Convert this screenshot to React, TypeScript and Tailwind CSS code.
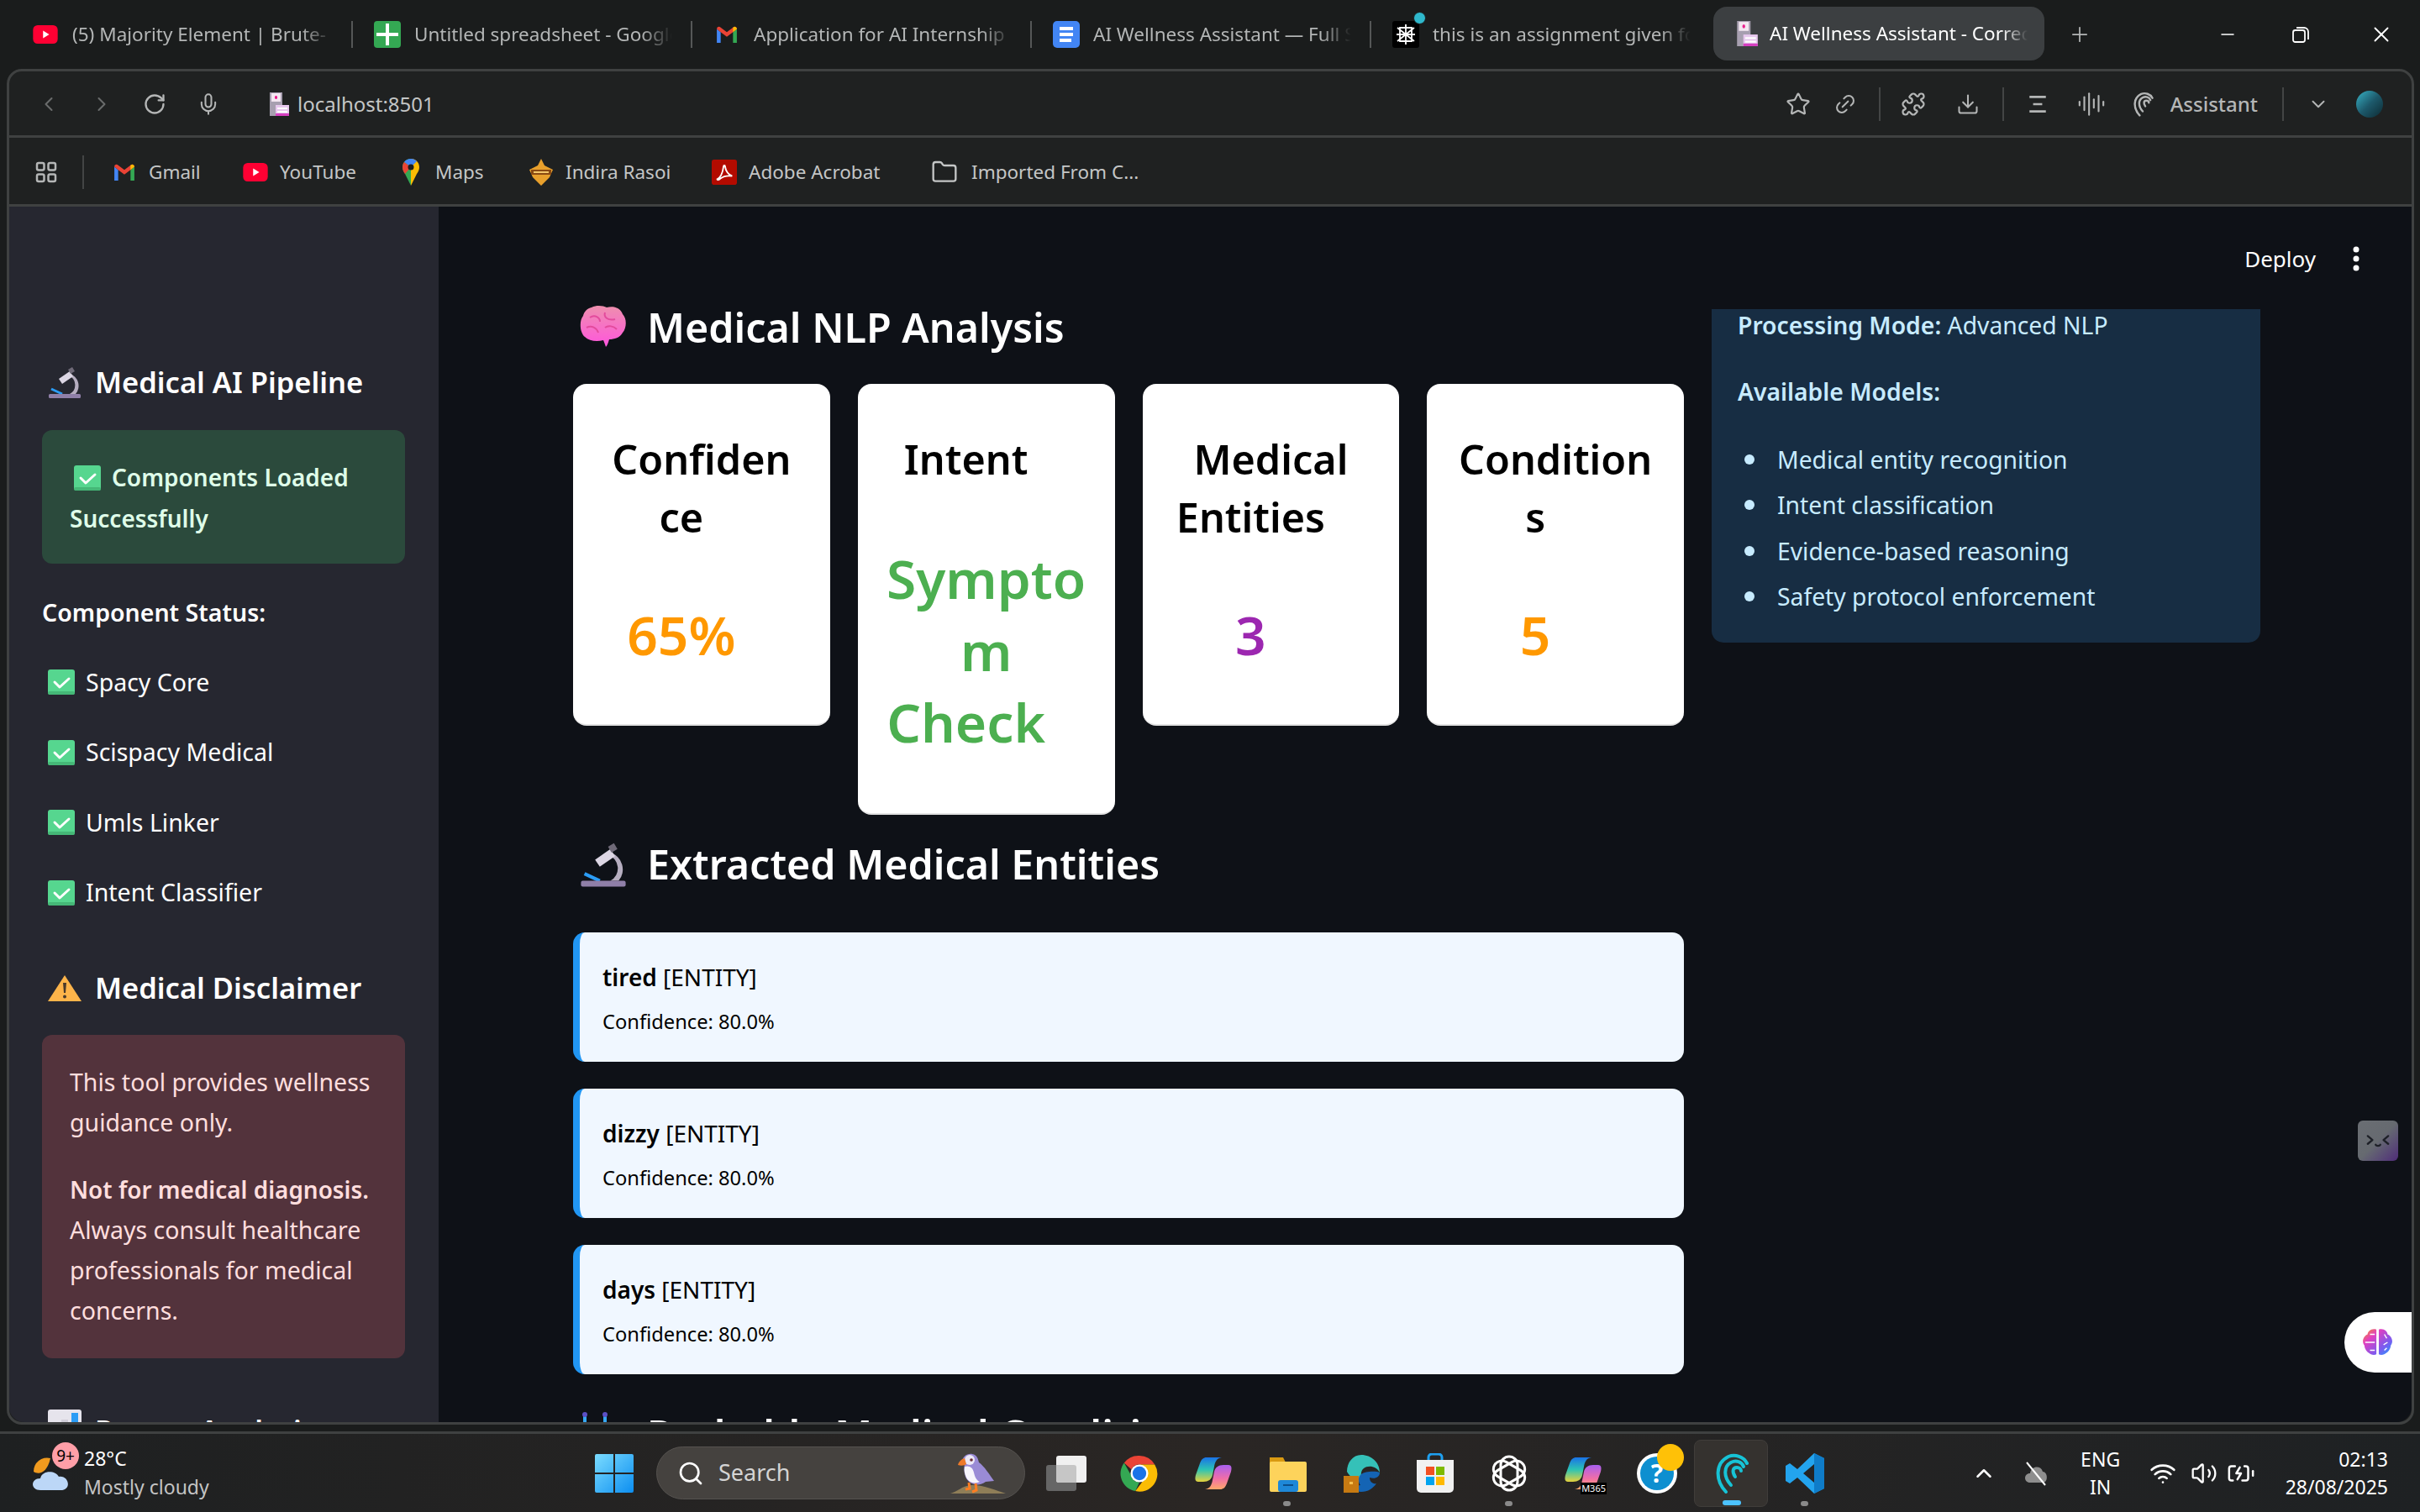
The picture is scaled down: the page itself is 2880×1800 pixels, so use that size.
import {
  AudioLines, ChevronDown, ChevronLeft, ChevronRight, ChevronUp, Download, Folder, Link2, Mic,
  Minus, Plus, Puzzle, RotateCw, Search, Star, Volume2, Wifi, X, BatteryCharging,
} from 'lucide-react';
import type { ReactNode } from 'react';

// small drawings for favicons and emoji
function Hospital({ className = 'w-[24px] h-[28px]' }: { className?: string }) {
  return (
    <svg viewBox="0 0 24 28" className={className}>
      <rect x="1" y="0" width="15" height="28" fill="#a79fb0" />
      <rect x="3" y="1" width="11" height="10" fill="#f3e6f1" />
      <path d="M7 6h3M8.500 4v4" stroke="#e91e8c" strokeWidth="2" />
      <rect x="8" y="15" width="16" height="13" fill="#e7c8ee" />
      <rect x="10" y="18" width="12" height="2" fill="#fff" />
      <rect x="10" y="22" width="12" height="2" fill="#fff" />
      <rect x="8" y="25" width="16" height="3" fill="#d63fc0" />
    </svg>
  );
}

function YouTubeIcon() {
  return (
    <svg viewBox="0 0 32 24" className="w-[30px] h-[22px]">
      <rect width="32" height="24" rx="6" fill="#ff0033" />
      <path d="M13 7l8 5-8 5z" fill="#fff" />
    </svg>
  );
}

function GmailIcon() {
  return (
    <svg viewBox="0 0 30 24" className="w-[28px] h-[22px]">
      <path d="M2 23V5l5 4v14z" fill="#4285f4" />
      <path d="M28 23V5l-5 4v14z" fill="#34a853" />
      <path d="M2 5c0-3 3-4 5-2l8 6 8-6c2-2 5-1 5 2l-5 4-8 6-8-6z" fill="#ea4335" />
      <path d="M23 9l5-4c0-2-2-3-3-3l-2 1z" fill="#fbbc04" />
    </svg>
  );
}

function SheetsIcon() {
  return (
    <svg viewBox="0 0 32 32" className="w-[32px] h-[32px]">
      <rect width="32" height="32" rx="4" fill="#34a853" />
      <path d="M3 14h26v4H3zM14 3h4v26h-4z" fill="#fff" />
    </svg>
  );
}

function DocsIcon() {
  return (
    <svg viewBox="0 0 32 32" className="w-[32px] h-[32px]">
      <rect width="32" height="32" rx="5" fill="#4285f4" />
      <path d="M8 7h16v4H8zM8 14h16v4H8zM8 21h14v4H8z" fill="#fff" />
    </svg>
  );
}

function PerplexityIcon() {
  return (
    <div className="relative w-[32px] h-[32px]">
      <svg viewBox="0 0 32 32" className="w-[32px] h-[32px]">
        <rect width="32" height="32" rx="3" fill="#000" />
        <path d="M16 4v24M6 8l20 16M26 8L6 24M5 16h22M9 8h14v16H9z" stroke="#fff" strokeWidth="1.800" fill="none" />
      </svg>
      <span className="absolute right-[-8px] top-[-11px] w-[15px] h-[15px] rounded-full bg-[#2fb8cc] border-[1px] border-[#1a1c1c]" />
    </div>
  );
}

function MapsIcon() {
  return (
    <svg viewBox="0 0 20 32" className="w-[22px] h-[32px]">
      <path d="M10 0C4 0 0 4.500 0 10c0 3 1 5 3 8l7 14V10z" fill="#34a853" />
      <path d="M10 0c6 0 10 4.500 10 10 0 3-1 5-3 8l-7 14V10z" fill="#fbbc04" />
      <path d="M2 4C4 1 7 0 10 0c3 0 5 1 7 3l-7 7z" fill="#4285f4" />
      <path d="M0 10c0-2 .800-4.500 2-6l8 6-7 8c-2-3-3-5-3-8z" fill="#ea4335" />
      <circle cx="10" cy="10" r="3.500" fill="#1c1e1e" />
    </svg>
  );
}

function RasoiIcon() {
  return (
    <svg viewBox="0 0 30 32" className="w-[30px] h-[32px]">
      <path d="M15 0l4 8 10 5-4 9-10 10L5 22 1 13l10-5z" fill="#e8a02c" />
      <path d="M3 13h24v6H3z" fill="#8a4a12" />
      <path d="M6 15h18v2H6z" fill="#f4c76a" />
    </svg>
  );
}

function AcrobatIcon() {
  return (
    <svg viewBox="0 0 32 32" className="w-[32px] h-[32px]">
      <rect width="32" height="32" rx="3" fill="#b30b00" />
      <path d="M7 25c4-2 7-9 8-16 0-2 2-2 2 0 1 6 4 10 9 12-6-1-11 0-15 3-2 2-4 2-4 1z" stroke="#fff" strokeWidth="2" fill="none" />
    </svg>
  );
}

function Microscope({ className = 'w-[40px] h-[40px]' }: { className?: string }) {
  return (
    <svg viewBox="0 0 40 40" className={className}>
      <path d="M24 12a12 12 0 0 1 2 22h7a15 15 0 0 0-7-24z" fill="#b6aec0" />
      <path d="M13 16L26 7l4 6-13 9z" fill="#dcd6e4" />
      <path d="M24 5l5-3 3 5-5 3z" fill="#6f6a78" />
      <path d="M4 28l13 6" stroke="#2b9cf5" strokeWidth="3" />
      <rect x="1" y="34" width="38" height="5" rx="1.500" fill="#8f7fa8" />
    </svg>
  );
}

function Warning() {
  return (
    <svg viewBox="0 0 40 32" className="w-[40px] h-[32px]">
      <path d="M20 1L40 32H0z" fill="#fdb44a" />
      <path d="M18 10h4l-1 12h-2z" fill="#4a3a2a" />
      <circle cx="20" cy="26.500" r="2" fill="#4a3a2a" />
    </svg>
  );
}

function Brain() {
  return (
    <svg viewBox="0 0 56 50" className="w-[58px] h-[50px] shrink-0">
      <defs>
        <linearGradient id="brainfill" x1="0" y1="0" x2="0" y2="1">
          <stop offset="0" stopColor="#ee8fae" />
          <stop offset="1" stopColor="#ff55dd" />
        </linearGradient>
      </defs>
      <path
        d="M14 2c6-3 14-2 18 0 8-2 16 0 19 8 5 5 5 16 0 22-3 6-10 8-16 8-1 3-2 7-4 9-1-3-2-6-3-8-8 2-17 1-22-4C0 32-1 18 4 12c1-5 5-9 10-10z"
        fill="url(#brainfill)"
      />
      <path d="M12 14c6-4 12 0 12 5M30 8c-2 6 4 10 12 8M8 26c6-3 12 0 14 6M30 26c4-3 10-2 14 2" stroke="#e34b9c" strokeWidth="2" fill="none" />
    </svg>
  );
}

function CheckBox() {
  return (
    <svg viewBox="0 0 32 30" className="w-[32px] h-[30px] shrink-0">
      <rect width="32" height="30" rx="3" fill="#56d68f" />
      <rect y="26" width="32" height="4" rx="2" fill="#45b877" />
      <path d="M8 15l6 6 11-10" stroke="#fff" strokeWidth="3" fill="none" strokeLinecap="round" strokeLinejoin="round" />
    </svg>
  );
}

function WindowsLogo() {
  return (
    <svg viewBox="0 0 46 46" className="w-[46px] h-[46px]">
      <defs>
        <linearGradient id="win" x1="0" y1="0" x2="1" y2="1">
          <stop offset="0" stopColor="#7bdcff" />
          <stop offset="1" stopColor="#0c8ef0" />
        </linearGradient>
      </defs>
      <path d="M0 2a2 2 0 0 1 2-2h20v22H0zM24 0h20a2 2 0 0 1 2 2v20H24zM0 24h22v22H2a2 2 0 0 1-2-2zM24 24h22v20a2 2 0 0 1-2 2H24z" fill="url(#win)" />
    </svg>
  );
}

function Puffin() {
  return (
    <svg viewBox="0 0 70 50" className="w-[70px] h-[50px]">
      <path d="M2 49c8-2 14-9 24-10 14-1 30 6 42 10z" fill="#8f7e58" />
      <path d="M16 12c0-7 6-11 12-10 6 1 7 6 8 10 6 4 13 15 18 22l-10 1c-8 6-20 4-24-6-2-6-2-11-1-15z" fill="#9a8bd6" />
      <path d="M19 17c5-2 10 1 11 7 1 5 3 9 7 11-6 3-13 1-16-5-2-4-3-9-2-13z" fill="#f7f5fc" />
      <circle cx="25" cy="9" r="6" fill="#ece8f7" />
      <circle cx="27" cy="9" r="1.800" fill="#6a2b35" />
      <path d="M19 7c-4 1-7 4-8 8 3 1 8 1 10-1z" fill="#ee7a2a" />
      <path d="M24 36l1 7-5 1M32 37l1 8-5 2" stroke="#ff7d22" strokeWidth="3" fill="none" />
    </svg>
  );
}

function ChromeIcon() {
  return (
    <svg viewBox="0 0 48 48" className="w-[46px] h-[46px]">
      <path d="M24 2a22 22 0 0 1 19 11H24a11 11 0 0 0-10 6L5 11A22 22 0 0 1 24 2z" fill="#ea4335" />
      <path d="M5 11l9 16a11 11 0 0 0 10 8l-5 11A22 22 0 0 1 5 11z" fill="#34a853" />
      <path d="M43 13a22 22 0 0 1-24 33l9-12a11 11 0 0 0 5-10 11 11 0 0 0-9-11z" fill="#fbbc04" />
      <circle cx="24" cy="24" r="11" fill="#fff" />
      <circle cx="24" cy="24" r="8.500" fill="#1a73e8" />
    </svg>
  );
}

function CopilotIcon({ badge }: { badge?: boolean }) {
  const a = badge ? 'cpa2' : 'cpa';
  const b = badge ? 'cpb2' : 'cpb';
  return (
    <div className="relative w-[44px] h-[40px]">
      <svg viewBox="0 0 44 40" className="w-[44px] h-[40px]">
        <defs>
          <linearGradient id={a} x1="0" y1="0" x2="0" y2="1">
            <stop offset="0" stopColor="#1a72e8" />
            <stop offset=".5" stopColor="#2cc4b4" />
            <stop offset="1" stopColor="#e6d23c" />
          </linearGradient>
          <linearGradient id={b} x1="0" y1="0" x2="0" y2="1">
            <stop offset="0" stopColor="#a85ff0" />
            <stop offset=".55" stopColor="#f06ea8" />
            <stop offset="1" stopColor="#ffa86a" />
          </linearGradient>
        </defs>
        <path d="M14 1H32C26 2 24 6 23 12L21 22C20 27 16 30 10 30H4C0 30 0 26 1 22L6 8C8 3 10 1 14 1z" fill={`url(#${a})`} />
        <path d="M30 39H12C18 38 20 34 21 28L23 18C24 13 28 10 34 10H40C44 10 44 14 43 18L38 32C36 37 34 39 30 39z" fill={`url(#${b})`} />
      </svg>
      {badge && (
        <span className="absolute right-[-6px] bottom-[-5px] bg-black text-white text-[11px] leading-[14px] px-[1px]">M365</span>
      )}
    </div>
  );
}

function FilesIcon() {
  return (
    <svg viewBox="0 0 46 46" className="w-[46px] h-[46px]">
      <path d="M2 4h16l4 8H2z" fill="#d99a12" />
      <rect x="2" y="9" width="44" height="36" rx="2" fill="#fdd35b" />
      <rect x="12" y="31" width="24" height="14" rx="3" fill="#1e88d8" />
      <rect x="18" y="36" width="12" height="2" fill="#0c4f8a" />
    </svg>
  );
}

function EdgeIcon() {
  return (
    <svg viewBox="0 0 46 46" className="w-[46px] h-[46px]">
      <path d="M23 1c12 0 22 9 22 21-4-8-14-9-19-5-4 3-4 9-1 13-9 2-16-3-19-9C6 10 13 1 23 1z" fill="#35c1b8" />
      <path d="M45 22c0 6-6 8-12 6 0 6 5 8 8 7-4 6-10 10-18 10-9 0-17-6-20-15 3 6 10 9 19 7-3-4-3-10 1-13 5-4 18-4 22-2z" fill="#1464b4" />
      <rect x="2" y="26" width="18" height="20" fill="#c77a12" />
      <rect x="9" y="33" width="4" height="3" fill="#f5c14e" />
    </svg>
  );
}

function StoreIcon() {
  return (
    <svg viewBox="0 0 46 48" className="w-[46px] h-[48px]">
      <path d="M15 9V5a4 4 0 0 1 4-4h8a4 4 0 0 1 4 4v4" stroke="#1ea0f0" strokeWidth="3" fill="none" />
      <path d="M1 8h44v34a5 5 0 0 1-5 5H6a5 5 0 0 1-5-5z" fill="#f1f1f1" />
      <rect x="12" y="16" width="10" height="10" fill="#f25022" />
      <rect x="24" y="16" width="10" height="10" fill="#7fba00" />
      <rect x="12" y="28" width="10" height="10" fill="#00a4ef" />
      <rect x="24" y="28" width="10" height="10" fill="#ffb900" />
    </svg>
  );
}

function GptIcon() {
  return (
    <svg viewBox="0 0 46 46" className="w-[46px] h-[46px]" fill="none" stroke="#fff" strokeWidth="3">
      <rect x="13" y="3" width="20" height="40" rx="10" />
      <rect x="13" y="3" width="20" height="40" rx="10" transform="rotate(60 23 23)" />
      <rect x="13" y="3" width="20" height="40" rx="10" transform="rotate(120 23 23)" />
    </svg>
  );
}

function HelpIcon() {
  return (
    <div className="relative w-[48px] h-[48px]">
      <div className="w-[48px] h-[48px] rounded-full bg-white flex items-center justify-center">
        <div className="w-[40px] h-[40px] rounded-full bg-[#0d8fd0] flex items-center justify-center text-white font-bold text-[30px] leading-none">?</div>
      </div>
      <span className="absolute right-[-8px] top-[-11px] w-[32px] h-[32px] rounded-full bg-[#ffc107]" />
    </div>
  );
}

function WaveIcon({ className = 'w-[46px] h-[48px] text-[#17c3d6]' }: { className?: string }) {
  return (
    <svg viewBox="0 0 46 48" className={className} fill="none" stroke="currentColor" strokeWidth="4" strokeLinecap="round">
      <path d="M17 46C4 32 4 12 20 4c8-3 18 0 22 8" />
      <path d="M23 38C14 28 14 16 23 11c6-3 13-1 15 5" />
      <path d="M28 28c-4-6-3-11 2-11 3 0 5 2 5 4" />
    </svg>
  );
}

function VsCodeIcon() {
  return (
    <svg viewBox="0 0 46 48" className="w-[46px] h-[48px]">
      <path d="M34 0l12 6v36l-12 6-20-19-9 7-5-3V15l5-3 9 7zM34 13L21 24l13 11z" fill="#23a4ee" />
      <path d="M34 0l12 6v36l-12 6z" fill="#0f7cc8" />
    </svg>
  );
}

function BrainChip() {
  return (
    <svg viewBox="0 0 40 36" className="w-[38px] h-[36px]">
      <defs>
        <linearGradient id="bc" x1="0" y1="0" x2="1" y2="1">
          <stop offset="0" stopColor="#f7941d" />
          <stop offset=".3" stopColor="#e23fc0" />
          <stop offset=".7" stopColor="#7a5cf0" />
          <stop offset="1" stopColor="#1ea0ff" />
        </linearGradient>
      </defs>
      <path d="M18 2c-6-2-11 2-11 6-5 2-8 9-4 14 0 7 9 14 15 11zM21 2c6-2 11 2 11 6 5 2 8 9 4 14 0 7-9 14-15 11z" fill="url(#bc)" />
      <path d="M4 18h12M10 8h6M10 28h6M28 8l3 5M32 18l-5 3M28 28l3-3" stroke="#fff" strokeWidth="1.500" fill="none" />
    </svg>
  );
}

type TabProps = { icon: ReactNode; title: string; width: string; sep?: boolean };

function Tab({ icon, title, width, sep = true }: TabProps) {
  return (
    <div className={`flex items-center h-[64px] shrink-0 ${width}`}>
      <div className="w-[32px] flex justify-center shrink-0">{icon}</div>
      <span className="ml-[16px] flex-1 min-w-0 overflow-hidden whitespace-nowrap text-[22.500px] text-[#b4b6b6] [mask-image:linear-gradient(to_right,black_88%,transparent)]">
        {title}
      </span>
      {sep ? <span className="w-[2px] h-[32px] bg-[#555757] ml-[22px] mr-[25px] shrink-0" /> : <span className="w-[12px]" />}
    </div>
  );
}

function Bookmark({ icon, label, width }: { icon: ReactNode; label: string; width: string }) {
  return (
    <div className={`flex items-center gap-[14px] shrink-0 ${width}`}>
      <div className="flex justify-center w-[30px] shrink-0">{icon}</div>
      <span className="text-[22.500px] text-[#c4c6c6] whitespace-nowrap">{label}</span>
    </div>
  );
}

function AppSlot({ children, dot, active }: { children: ReactNode; dot?: boolean; active?: boolean }) {
  return (
    <div className={`relative w-[88px] h-[80px] flex items-center justify-center shrink-0 rounded-[8px] ${active ? 'bg-[#35322f] border border-[#403d3a]' : ''}`}>
      {children}
      {dot && <span className="absolute bottom-[1px] left-[39px] w-[9px] h-[6px] rounded-full bg-[#8a8a8a]" />}
      {active && <span className="absolute bottom-[1px] left-[33px] w-[22px] h-[6px] rounded-full bg-[#4cc2ff]" />}
    </div>
  );
}

const statusItems = ['Spacy Core', 'Scispacy Medical', 'Umls Linker', 'Intent Classifier'];
const entities = ['tired', 'dizzy', 'days'];
const models = ['Medical entity recognition', 'Intent classification', 'Evidence-based reasoning', 'Safety protocol enforcement'];

function Sidebar() {
  return (
    <aside className="w-[511px] shrink-0 bg-[#262730] overflow-hidden rounded-bl-[18px] pl-[39px] pr-[40px] pt-[181px]">
      <div className="flex items-center h-[56px] ml-[7px]">
        <Microscope />
        <h2 className="ml-[16px] text-[34.500px] font-semibold text-white whitespace-nowrap">Medical AI Pipeline</h2>
      </div>
      <div className="mt-[29px] h-[159px] rounded-[12px] bg-[#2b4a3c] pl-[33px] pt-[32px] text-[28px] leading-[49px] font-semibold text-[#dffde9]">
        <span className="inline-flex items-center ml-[5px] align-[-5px]"><CheckBox /></span>
        <span className="ml-[13px]">Components Loaded</span>
        <br />
        Successfully
      </div>
      <p className="mt-[34px] h-[48px] leading-[48px] text-[28.500px] font-semibold text-white">Component Status:</p>
      <div className="mt-[35px]">
        {statusItems.map((item) => (
          <div key={item} className="flex items-center h-[48px] mb-[35.500px] ml-[7px]">
            <CheckBox />
            <span className="ml-[13px] text-[28.500px] text-white whitespace-nowrap">{item}</span>
          </div>
        ))}
      </div>
      <div className="flex items-center h-[56px] ml-[7px] mt-[61px]">
        <Warning />
        <h2 className="ml-[16px] text-[34.500px] font-semibold text-white whitespace-nowrap">Medical Disclaimer</h2>
      </div>
      <div className="mt-[28px] h-[385px] rounded-[12px] bg-[#53333c] pl-[33px] pt-[32px] text-[28.500px] leading-[48px] text-[#ffdede]">
        <p>
          This tool provides wellness
          <br />
          guidance only.
        </p>
        <p className="mt-[32px]">
          <strong className="font-semibold text-[27.900px]">Not for medical diagnosis.</strong>
          <br />
          Always consult healthcare
          <br />
          professionals for medical
          <br />
          concerns.
        </p>
      </div>
      <div className="flex items-center h-[56px] ml-[7px] mt-[58px]">
        <svg viewBox="0 0 40 40" className="w-[40px] h-[40px] -mt-[10px]">
          <rect width="40" height="40" rx="3" fill="#e6e4ec" />
          <rect x="4" y="20" width="8" height="20" fill="#62c554" />
          <rect x="16" y="12" width="8" height="28" fill="#d0cdd8" />
          <rect x="28" y="4" width="8" height="36" fill="#2b9cf5" />
        </svg>
        <h2 className="ml-[16px] text-[34.500px] font-semibold text-white whitespace-nowrap">Recent Analysis</h2>
      </div>
    </aside>
  );
}

function MetricCard({ title, value, color, tall }: { title: ReactNode; value: ReactNode; color: string; tall?: boolean }) {
  return (
    <div className={`bg-white rounded-[16px] text-center border-b-2 border-[#e2e2e2] pt-[55px] ${tall ? 'pb-[65px]' : 'pb-[63px]'}`}>
      <h3 className="text-[48.500px] leading-[69px] font-semibold text-black">
        {title}
        <span className="inline-block w-[48px]" />
      </h3>
      <div className={`${tall ? 'mt-[65px]' : 'mt-[63px]'} text-[64px] leading-[85.500px] font-semibold ${color}`}>
        {value}
        <span className="inline-block w-[48px]" />
      </div>
    </div>
  );
}

function Main() {
  return (
    <main className="relative flex-1 min-w-0 bg-[#0e1117] overflow-hidden rounded-br-[18px] pl-[160px] pr-[180px]">
      <header className="h-[122px] flex items-center justify-end -mr-[160px] pt-[2px]">
        <span className="text-[26px] text-white mr-[44px]">Deploy</span>
        <svg viewBox="0 0 8 30" className="w-[8px] h-[30px] mr-[42px]" fill="#fff">
          <circle cx="4" cy="4" r="3.500" />
          <circle cx="4" cy="15" r="3.500" />
          <circle cx="4" cy="26" r="3.500" />
        </svg>
      </header>
      <div className="flex gap-[33px] items-start">
        <section className="w-[1322px] shrink-0 -mt-[5px]">
          <div className="flex items-center h-[52px] ml-[7px]">
            <Brain />
            <h2 className="ml-[23px] text-[48.400px] font-semibold text-white whitespace-nowrap leading-none">Medical NLP Analysis</h2>
          </div>
          <div className="grid grid-cols-4 gap-[33px] items-start mt-[42px]">
            <MetricCard title={<>Confiden<br />ce</>} value="65%" color="text-[#ff9800]" />
            <MetricCard title="Intent" value={<>Sympto<br />m<br />Check</>} color="text-[#4caf50]" tall />
            <MetricCard title={<>Medical<br />Entities</>} value="3" color="text-[#9c27b0]" />
            <MetricCard title={<>Condition<br />s</>} value="5" color="text-[#ff9800]" />
          </div>
          <div className="flex items-center h-[60px] ml-[7px] mt-[29px]">
            <Microscope className="w-[58px] h-[56px] shrink-0" />
            <h2 className="ml-[23px] text-[48.400px] font-semibold text-white whitespace-nowrap leading-none">Extracted Medical Entities</h2>
          </div>
          <div className="mt-[51px] flex flex-col gap-[32px]">
            {entities.map((name) => (
              <div key={name} className="h-[154px] rounded-[14px] bg-[#f0f7ff] border-l-[8px] border-[#2196f3] pl-[27px] pt-[33px] text-black">
                <p className="text-[28px] leading-[40px]">
                  <strong className="font-semibold">{name}</strong> [ENTITY]
                </p>
                <p className="text-[23.700px] leading-[36px] mt-[15px]">Confidence: 80.0%</p>
              </div>
            ))}
          </div>
          <div className="flex items-center h-[60px] ml-[7px] mt-[42px]">
            <svg viewBox="0 0 56 56" className="w-[58px] h-[56px] shrink-0" fill="none" stroke="#35a7f2" strokeWidth="4">
              <path d="M6 3v18c0 8 6 14 12 14s12-6 12-14V3" />
              <circle cx="6" cy="4" r="3" fill="#5a4fc4" stroke="none" />
              <circle cx="30" cy="4" r="3" fill="#5a4fc4" stroke="none" />
            </svg>
            <h2 className="ml-[23px] text-[48.400px] font-semibold text-white whitespace-nowrap leading-none">Probable Medical Conditions</h2>
          </div>
        </section>
        <aside className="w-[653px] shrink-0 h-[397px] bg-[#172d43] rounded-b-[14px] pl-[31px] text-[28.300px] text-[#c7ebff]">
          <p className="leading-[40px] -mt-[1px]">
            <strong className="font-semibold">Processing Mode:</strong> Advanced NLP
          </p>
          <p className="leading-[40px] mt-[39px] font-semibold">Available Models:</p>
          <ul className="mt-[34px]">
            {models.map((m) => (
              <li key={m} className="flex items-center leading-[54.300px]">
                <span className="ml-[8px] mr-[27px] w-[12px] h-[12px] rounded-full bg-[#c7ebff] shrink-0" />
                {m}
              </li>
            ))}
          </ul>
        </aside>
      </div>
      {/* extension widgets floating on the page */}
      <div className="absolute left-[2284px] top-[1088px] w-[48px] h-[48px] rounded-[6px] bg-gradient-to-br from-[#6a6e73] via-[#666a70] to-[#4f2a78] flex items-center justify-center">
        <svg viewBox="0 0 32 16" className="w-[30px] h-[16px]" fill="none" stroke="#1d2027" strokeWidth="2.500" strokeLinecap="round" strokeLinejoin="round">
          <path d="M3 2l6 5-6 5M29 2l-6 5 6 5M13 13c1 2 5 2 6 0" />
        </svg>
      </div>
      <div className="absolute right-0 top-[1316px] w-[80px] h-[72px] rounded-l-[36px] bg-white flex items-center justify-center">
        <BrainChip />
      </div>
    </main>
  );
}

export default function App() {
  return (
    <div className="h-[1800px] w-[2880px] flex flex-col overflow-hidden bg-[#1a1c1c] text-white font-['Noto_Sans',sans-serif]">
      {/* Tab strip */}
      <div className="h-[82px] shrink-0 flex items-center pl-[38px]">
        <Tab width="w-[407px]" icon={<YouTubeIcon />} title="(5) Majority Element | Brute-" />
        <Tab width="w-[404px]" icon={<SheetsIcon />} title="Untitled spreadsheet - Google" />
        <Tab width="w-[404px]" icon={<GmailIcon />} title="Application for AI Internship" />
        <Tab width="w-[404px]" icon={<DocsIcon />} title="AI Wellness Assistant — Full St" />
        <Tab width="w-[367px]" icon={<PerplexityIcon />} title="this is an assignment given for" sep={false} />
        <div className="ml-[15px] w-[394px] h-[64px] shrink-0 rounded-[16px] bg-[#3c3f41] flex items-center pl-[27px] relative top-[-1px]">
          <Hospital className="w-[26px] h-[30px] shrink-0" />
          <span className="ml-[14px] w-[307px] overflow-hidden whitespace-nowrap text-[22.500px] text-white [mask-image:linear-gradient(to_right,black_90%,transparent)]">
            AI Wellness Assistant - Correct
          </span>
        </div>
        <Plus className="ml-[28px] w-[28px] h-[28px] text-[#b4b6b6]" strokeWidth={1.5} />
        <div className="flex-1" />
        <Minus className="w-[24px] h-[24px] text-white mr-[65px]" strokeWidth={1.5} />
        <svg viewBox="0 0 20 20" className="w-[20px] h-[20px] mr-[71px]" fill="none" stroke="#fff" strokeWidth="1.800">
          <rect x="1" y="5" width="14" height="14" rx="2.500" />
          <path d="M5 2h9a5 5 0 0 1 5 5v9" />
        </svg>
        <X className="w-[30px] h-[30px] text-white mr-[31px]" strokeWidth={1.5} />
      </div>

      {/* Browser panel */}
      <div className="ml-[8px] mr-[7px] h-[1614px] shrink-0 flex flex-col border-[3px] border-[#3f4141] rounded-[18px] overflow-hidden bg-[#1f2121]">
        <div className="h-[79px] shrink-0 flex items-center border-b-[3px] border-[#3f4141] text-[#b4b6b6] pt-[2px]">
          <ChevronLeft className="ml-[33px] w-[28px] h-[28px] text-[#6a6c6c]" strokeWidth={1.75} />
          <ChevronRight className="ml-[35px] w-[28px] h-[28px] text-[#6a6c6c]" strokeWidth={1.75} />
          <RotateCw className="ml-[35px] w-[28px] h-[28px]" strokeWidth={2} />
          <Mic className="ml-[36px] w-[28px] h-[30px]" strokeWidth={1.75} />
          <Hospital className="ml-[58px] w-[24px] h-[28px]" />
          <span className="ml-[10px] text-[24px] text-[#c4c6c6]">localhost:8501</span>
          <div className="flex-1" />
          <Star className="w-[30px] h-[30px]" strokeWidth={1.75} />
          <Link2 className="ml-[27px] w-[28px] h-[28px] -rotate-45" strokeWidth={1.75} />
          <span className="ml-[26px] w-[2px] h-[40px] bg-[#434545]" />
          <Puzzle className="ml-[24px] w-[30px] h-[30px]" strokeWidth={1.75} />
          <Download className="ml-[36px] w-[28px] h-[30px]" strokeWidth={1.75} />
          <span className="ml-[27px] w-[2px] h-[40px] bg-[#434545]" />
          <svg viewBox="0 0 24 24" className="ml-[27px] w-[26px] h-[26px]" stroke="currentColor" strokeWidth="2.500" fill="none">
            <path d="M3 4h18M7 12h10M3 20h18" />
          </svg>
          <AudioLines className="ml-[34px] w-[34px] h-[34px]" strokeWidth={1.5} />
          <WaveIcon className="ml-[30px] w-[28px] h-[30px]" />
          <span className="ml-[19px] text-[24px] font-medium">Assistant</span>
          <span className="ml-[29px] w-[2px] h-[40px] bg-[#434545]" />
          <ChevronDown className="ml-[28px] w-[26px] h-[26px]" strokeWidth={1.75} />
          <div className="ml-[32px] w-[32px] h-[32px] rounded-full bg-gradient-to-br from-[#38b6c9] via-[#1d5a6c] to-[#0d2b33] mr-[34px]" />
        </div>
        <div className="h-[82px] shrink-0 flex items-center border-b-[3px] border-[#3f4141] pt-[2px]">
          <svg viewBox="0 0 26 26" className="ml-[31px] w-[26px] h-[26px] text-[#b4b6b6]" fill="none" stroke="currentColor" strokeWidth="2.500">
            <rect x="2" y="2" width="8.500" height="8.500" rx="2" />
            <rect x="15.500" y="2" width="8.500" height="8.500" rx="2" />
            <rect x="2" y="15.500" width="8.500" height="8.500" rx="2" />
            <rect x="15.500" y="15.500" width="8.500" height="8.500" rx="2" />
          </svg>
          <span className="ml-[30px] mr-[33px] w-[2px] h-[40px] bg-[#434545]" />
          <Bookmark width="w-[156px]" icon={<GmailIcon />} label="Gmail" />
          <Bookmark width="w-[185px]" icon={<YouTubeIcon />} label="YouTube" />
          <Bookmark width="w-[155px]" icon={<MapsIcon />} label="Maps" />
          <Bookmark width="w-[218px]" icon={<RasoiIcon />} label="Indira Rasoi" />
          <Bookmark width="w-[260px]" icon={<AcrobatIcon />} label="Adobe Acrobat" />
          <div className="flex items-center shrink-0">
            <Folder className="w-[34px] h-[32px] text-[#c4c6c6]" strokeWidth={1.75} />
            <span className="ml-[15px] text-[22.500px] text-[#c4c6c6] whitespace-nowrap">Imported From C...</span>
          </div>
        </div>
        <div className="flex-1 min-h-0 flex">
          <Sidebar />
          <Main />
        </div>
      </div>

      {/* Taskbar */}
      <div className="mt-[8px] flex-1 min-h-0 border-t-[3px] border-[#3f4141] bg-gradient-to-r from-[#1e2021] via-[#2a2624] to-[#1e2123] flex items-center">
        <div className="relative ml-[38px] w-[48px] h-[48px] shrink-0">
          <svg viewBox="0 0 48 48" className="w-[48px] h-[48px]">
            <path d="M22 6a16 16 0 0 0-20 16c6 4 16 2 20-16z" fill="#f09a1e" />
            <path d="M10 44c-12 0-12-14 0-14 2-10 18-10 22-2 12-2 16 16 2 16z" fill="#bcd7f7" />
          </svg>
          <span className="absolute left-[24px] top-[-13px] w-[32px] h-[32px] rounded-full bg-[#ff9fa8] text-black text-[19px] leading-[32px] text-center">9+</span>
        </div>
        <div className="ml-[14px] w-[220px] shrink-0 flex flex-col">
          <span className="text-[23px] leading-[34px] text-white -mt-[2px]">28°C</span>
          <span className="text-[23px] leading-[34px] text-[#c4c4c4]">Mostly cloudy</span>
        </div>
        <div className="ml-[388px] shrink-0"><WindowsLogo /></div>
        <div className="ml-[27px] w-[439px] h-[63px] shrink-0 rounded-full bg-[#45423f] border border-[#55524f] flex items-center pl-[24px] pr-[20px]">
          <Search className="w-[32px] h-[32px] text-white" strokeWidth={2} />
          <span className="ml-[17px] text-[27px] text-[#d4d4d4]">Search</span>
          <div className="flex-1" />
          <Puffin />
        </div>
        <svg viewBox="0 0 48 42" className="ml-[25px] w-[48px] h-[42px] shrink-0">
          <rect x="0" y="11" width="36" height="31" rx="3" fill="#666" />
          <rect x="12" y="0" width="36" height="32" rx="3" fill="#f0f0f0" />
          <path d="M12 11h21a3 3 0 0 1 3 3v18H15a3 3 0 0 1-3-3z" fill="#c6c6c6" />
        </svg>
        <div className="ml-[19px] flex items-center shrink-0">
          <AppSlot><ChromeIcon /></AppSlot>
          <AppSlot><CopilotIcon /></AppSlot>
          <AppSlot dot><FilesIcon /></AppSlot>
          <AppSlot><EdgeIcon /></AppSlot>
          <AppSlot><StoreIcon /></AppSlot>
          <AppSlot dot><GptIcon /></AppSlot>
          <AppSlot><CopilotIcon badge /></AppSlot>
          <AppSlot><HelpIcon /></AppSlot>
          <AppSlot active><WaveIcon /></AppSlot>
          <AppSlot dot><VsCodeIcon /></AppSlot>
        </div>
        <div className="flex-1" />
        <ChevronUp className="w-[30px] h-[30px] text-white shrink-0" strokeWidth={2} />
        <svg viewBox="0 0 32 32" className="ml-[31px] w-[32px] h-[32px] shrink-0">
          <path d="M9 27c-8 0-8-11 0-11 1-9 13-10 15-2 6 0 7 13 0 13z" fill="#8e8e8e" />
          <path d="M5 3l22 27" stroke="#fff" strokeWidth="2" />
        </svg>
        <div className="ml-[36px] w-[50px] shrink-0 text-center text-[23px] leading-[33px] text-white">
          ENG
          <br />
          IN
        </div>
        <Wifi className="ml-[33px] w-[32px] h-[32px] text-white shrink-0" strokeWidth={2} />
        <Volume2 className="ml-[17px] w-[32px] h-[32px] text-white shrink-0" strokeWidth={1.75} />
        <BatteryCharging className="ml-[11px] w-[34px] h-[34px] text-white shrink-0" strokeWidth={1.75} />
        <div className="ml-[36px] mr-[38px] text-right text-[23px] leading-[33px] text-white shrink-0">
          02:13
          <br />
          28/08/2025
        </div>
      </div>
    </div>
  );
}
